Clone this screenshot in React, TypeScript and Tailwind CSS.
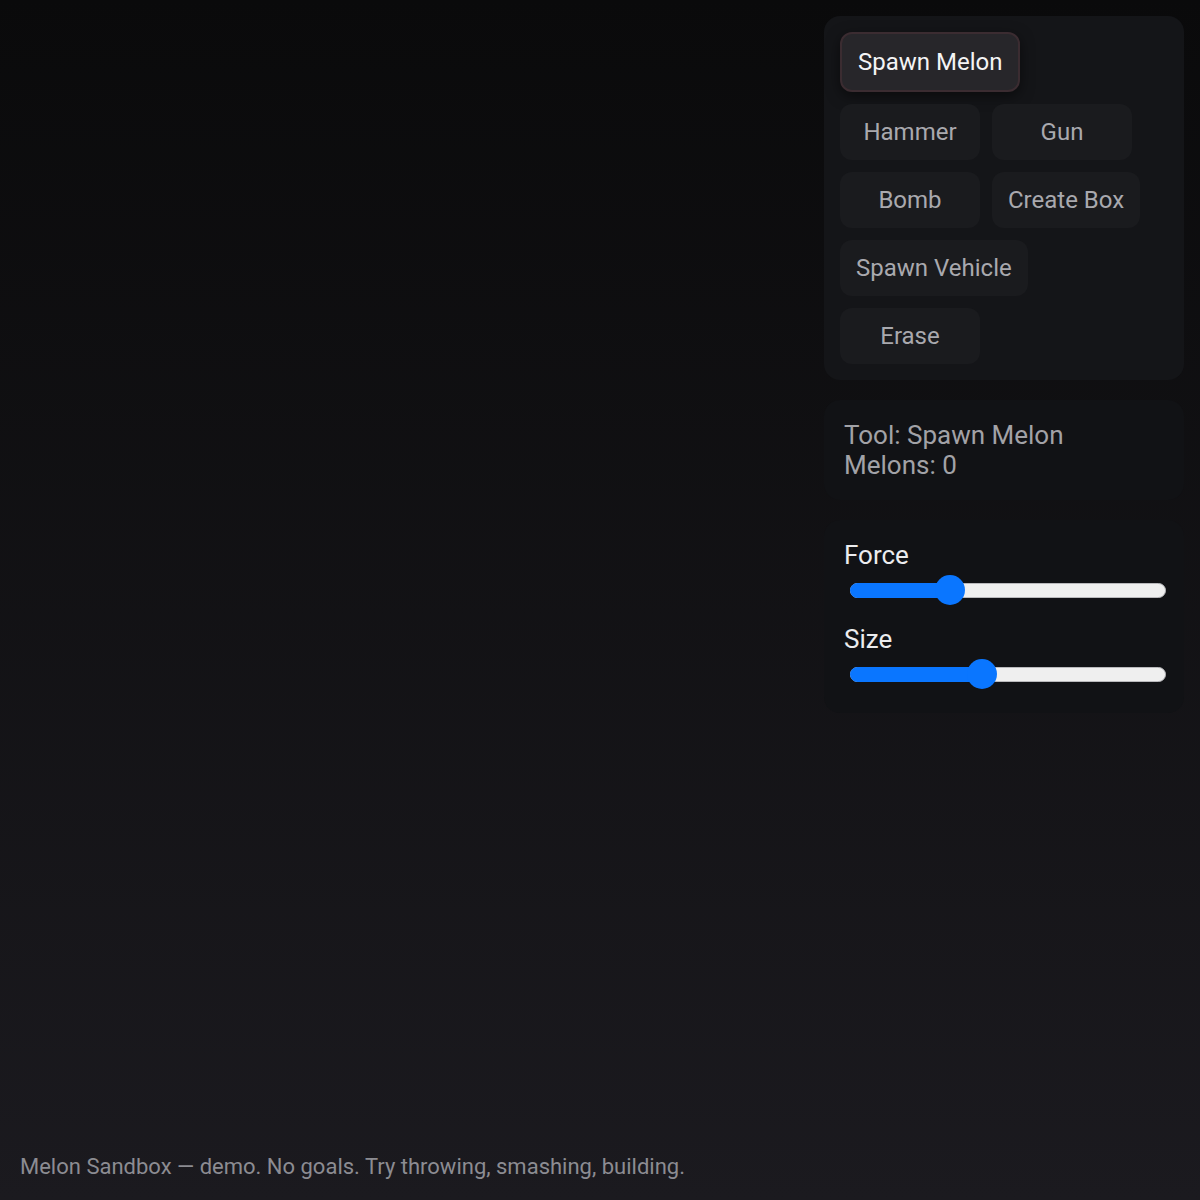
import React from "react";

const tools = ["Spawn Melon", "Hammer", "Gun", "Bomb", "Create Box", "Spawn Vehicle", "Erase"];

function Slider({ label, thumb }: { label: string; thumb: number }) {
  return (
    <div className="flex flex-col">
      <div className="text-[26px] leading-[30px] text-[#ececee]">{label}</div>
      <div className="relative mt-[5px] ml-[6px] h-[30px] w-[316px]">
        <div className="absolute left-0 right-0 top-[8px] h-[15px] rounded-full border border-[#b9b9bc] bg-[#efefef]" />
        <div
          className="absolute left-0 top-[8px] h-[15px] rounded-l-full bg-[#0a76ff]"
          style={{ width: thumb }}
        />
        <div
          className="absolute top-0 h-[30px] w-[30px] rounded-full bg-[#0a76ff]"
          style={{ left: thumb - 15 }}
        />
      </div>
    </div>
  );
}

export default function App() {
  const active = "Spawn Melon";
  return (
    <div
      className="flex h-[1200px] w-full bg-gradient-to-b from-[#0a0a0b] to-[#1b1a1f]"
      style={{ fontFamily: "Roboto, 'Noto Sans', sans-serif" }}
    >
      <div className="flex flex-1 flex-col justify-end pb-[19px] pl-5">
        <p className="text-[22px] leading-[28px] text-[#8c8c92]">
          Melon Sandbox — demo. No goals. Try throwing, smashing, building.
        </p>
      </div>
      <div className="mr-4 mt-4 flex w-[360px] flex-col gap-5">
        <div className="rounded-2xl bg-[#141518] p-4">
          <div className="flex flex-wrap gap-3">
            {tools.map((t) =>
              t === active ? (
                <button
                  key={t}
                  className="rounded-[12px] border-2 border-[#3b2c31] bg-[#27262a] px-4 py-[14px] text-[24px] leading-[28px] text-[#f4f4f5] shadow-[0_4px_14px_rgba(0,0,0,0.5)]"
                >
                  {t}
                </button>
              ) : (
                <button
                  key={t}
                  className="min-w-[140px] rounded-[12px] bg-[#1a1b1e] px-4 py-[14px] text-[24px] leading-[28px] text-[#a9a9ae]"
                >
                  {t}
                </button>
              )
            )}
          </div>
        </div>
        <div className="rounded-2xl bg-[#111215] p-5 text-[26px] leading-[30px] text-[#a2a2a7]">
          <div>Tool: Spawn Melon</div>
          <div>Melons: 0</div>
        </div>
        <div className="flex flex-col gap-[19px] rounded-2xl bg-[#111215] px-5 pb-6 pt-5">
          <Slider label="Force" thumb={100} />
          <Slider label="Size" thumb={132} />
        </div>
      </div>
    </div>
  );
}
